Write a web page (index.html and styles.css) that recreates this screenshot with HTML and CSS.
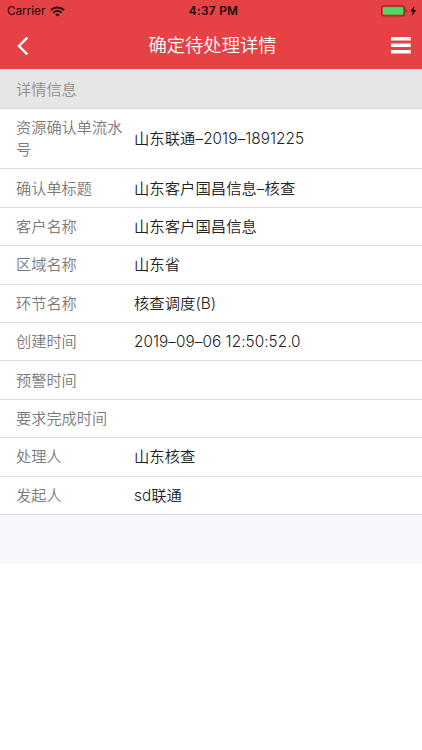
FILE: index.html
```html
<!DOCTYPE html>
<html lang="zh-CN">
<head>
    <meta charset="UTF-8">
    <title>确定待处理详情</title>
    <link rel="stylesheet" href="styles.css">
</head>
<body>
    <header class="header">
        <div class="status-bar">
            <div class="status-left">
                <span class="carrier">Carrier</span>
                <svg class="wifi-icon" width="15" height="11" viewBox="0 0 15 11">
                    <path d="M1 4.1a9.2 9.2 0 0 1 13 0" fill="none" stroke="#190707" stroke-width="2"/>
                    <path d="M3.5 6.6a5.7 5.7 0 0 1 8 0" fill="none" stroke="#190707" stroke-width="1.8"/>
                    <path d="M5.3 8.5a3.1 3.1 0 0 1 4.4 0L7.5 10.6z" fill="#190707"/>
                </svg>
            </div>
            <span class="clock">4:37 PM</span>
            <div class="status-right">
                <svg width="36" height="12" viewBox="0 0 36 12">
                    <rect x="0.6" y="0.9" width="22.8" height="10" rx="2" fill="none" stroke="#8b3026" stroke-width="1.2"/>
                    <rect x="2" y="2.3" width="20" height="7.2" rx="0.8" fill="#4cd964"/>
                    <path d="M24.6 4.2q1.5.4 1.5 1.7t-1.5 1.7z" fill="#8b2a2a"/>
                    <path d="M33.3 1L29.3 6.5h2.5L30.9 11l4.4-6h-2.7z" fill="#190707"/>
                </svg>
            </div>
        </div>
        <div class="nav-bar">
            <button class="nav-button" aria-label="返回">
                <svg width="12" height="20" viewBox="0 0 12 20">
                    <path d="M10.3 1.6L1.9 10l8.4 8.4" fill="none" stroke="#fff" stroke-width="2.4"/>
                </svg>
            </button>
            <h1 class="nav-title">确定待处理详情</h1>
            <button class="nav-button" aria-label="菜单">
                <svg width="20" height="17" viewBox="0 0 20 17">
                    <path d="M0 1.8h19.7M0 8.2h19.7M0 14.8h19.7" stroke="#fff" stroke-width="3.5"/>
                </svg>
            </button>
        </div>
    </header>
    <main class="detail">
        <h2 class="detail-title">详情信息</h2>
        <dl class="detail-list">
            <div class="detail-row">
                <dt class="label">资源确认单流水号</dt>
                <dd class="value">山东联通–2019–1891225</dd>
            </div>
            <div class="detail-row">
                <dt class="label">确认单标题</dt>
                <dd class="value">山东客户国昌信息–核查</dd>
            </div>
            <div class="detail-row">
                <dt class="label">客户名称</dt>
                <dd class="value">山东客户国昌信息</dd>
            </div>
            <div class="detail-row">
                <dt class="label">区域名称</dt>
                <dd class="value">山东省</dd>
            </div>
            <div class="detail-row">
                <dt class="label">环节名称</dt>
                <dd class="value">核查调度(B)</dd>
            </div>
            <div class="detail-row">
                <dt class="label">创建时间</dt>
                <dd class="value">2019–09–06 12:50:52.0</dd>
            </div>
            <div class="detail-row">
                <dt class="label">预警时间</dt>
                <dd class="value"></dd>
            </div>
            <div class="detail-row">
                <dt class="label">要求完成时间</dt>
                <dd class="value"></dd>
            </div>
            <div class="detail-row">
                <dt class="label">处理人</dt>
                <dd class="value">山东核查</dd>
            </div>
            <div class="detail-row">
                <dt class="label">发起人</dt>
                <dd class="value">sd联通</dd>
            </div>
        </dl>
    </main>
</body>
</html>
```
FILE: styles.css
```css
* {
    box-sizing: border-box;
}

body {
    margin: 0;
    background-color: #fff;
    font-family: "Liberation Sans", "Noto Sans CJK SC", sans-serif;
    font-size: 15.2px;
    font-weight: 350;
    line-height: 22px;
    color: #222;
}

.header {
    height: 69px;
    background-color: #e64144;
}

.status-bar {
    display: grid;
    grid-template-columns: 1fr auto 1fr;
    align-items: center;
    height: 22px;
    padding: 0 5px 0 7px;
    font-family: Inter, sans-serif;
    font-size: 12px;
    color: #190707;
}

.status-left {
    display: flex;
    align-items: center;
    gap: 5px;
}

.carrier {
    font-size: 11.7px;
    font-weight: 400;
}

.clock {
    padding-left: 3px;
    font-size: 11.8px;
    font-weight: 600;
    letter-spacing: 0.3px;
}

.status-right {
    display: flex;
    justify-content: flex-end;
}

.nav-bar {
    display: flex;
    align-items: center;
    justify-content: space-between;
    height: 47px;
    padding: 0 11px 0 17px;
}

.nav-button {
    display: flex;
    padding: 0;
    border: none;
    background: none;
}

.nav-title {
    margin: 0;
    padding-left: 5px;
    font-size: 18.3px;
    font-weight: 350;
    color: #fff;
}

.detail {
    height: 495px;
    background-color: #f7f8fb;
}

.detail-title {
    height: 40px;
    margin: 0;
    padding: 10px 16px 7px;
    border-bottom: 1px solid #dcdcdc;
    background-color: #e6e6e6;
    font-size: 15.2px;
    font-weight: 350;
    color: #8f8f8f;
}

.detail-list {
    margin: 0;
}

.detail-row {
    display: flex;
    align-items: center;
    min-height: 38.4px;
    padding: 8.3px 16px 7.1px;
    border-bottom: 1px solid #dcdcdc;
    background-color: #fff;
}

.label {
    width: 108px;
    margin-right: 10px;
    color: #7a7a7a;
}

.value {
    margin: 0;
    font-family: Inter, "Noto Sans CJK SC", sans-serif;
    font-size: 15.3px;
    letter-spacing: 0.06px;
}
```
